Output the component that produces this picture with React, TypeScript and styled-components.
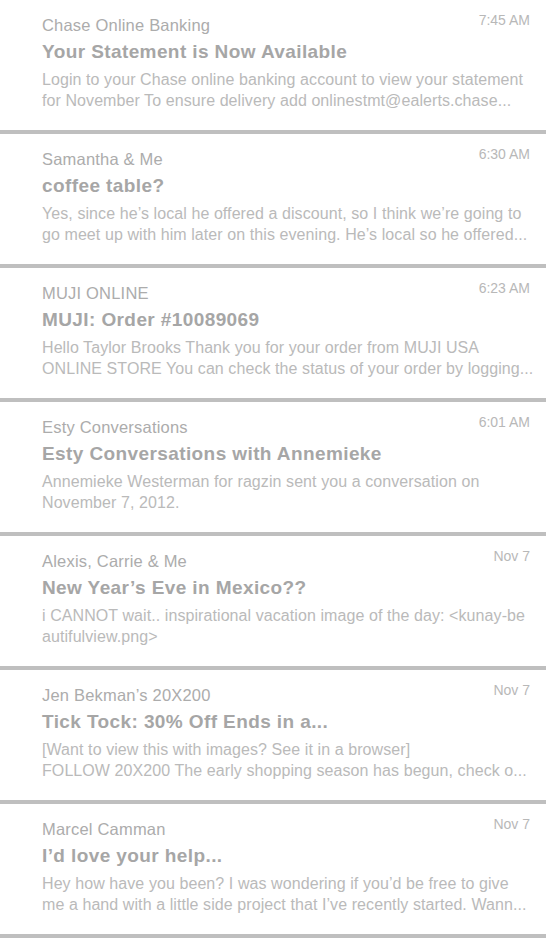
import styled, { createGlobalStyle } from "styled-components";

type Message = {
  from: string;
  time: string;
  subject: string;
  preview: string[];
};

const messages: Message[] = [
  {
    from: "Chase Online Banking",
    time: "7:45 AM",
    subject: "Your Statement is Now Available",
    preview: [
      "Login to your Chase online banking account to view your statement",
      "for November To ensure delivery add onlinestmt@ealerts.chase...",
    ],
  },
  {
    from: "Samantha & Me",
    time: "6:30 AM",
    subject: "coffee table?",
    preview: [
      "Yes, since he\u2019s local he offered a discount, so I think we\u2019re going to",
      "go meet up with him later on this evening. He\u2019s local so he offered...",
    ],
  },
  {
    from: "MUJI ONLINE",
    time: "6:23 AM",
    subject: "MUJI: Order #10089069",
    preview: [
      "Hello Taylor Brooks Thank you for your order from MUJI USA",
      "ONLINE STORE You can check the status of your order by logging...",
    ],
  },
  {
    from: "Esty Conversations",
    time: "6:01 AM",
    subject: "Esty Conversations with Annemieke",
    preview: [
      "Annemieke Westerman for ragzin sent you a conversation on",
      "November 7, 2012.",
    ],
  },
  {
    from: "Alexis, Carrie & Me",
    time: "Nov 7",
    subject: "New Year\u2019s Eve in Mexico??",
    preview: [
      "i CANNOT wait.. inspirational vacation image of the day: <kunay-be",
      "autifulview.png>",
    ],
  },
  {
    from: "Jen Bekman\u2019s 20X200",
    time: "Nov 7",
    subject: "Tick Tock: 30% Off Ends in a...",
    preview: [
      "[Want to view this with images? See it in a browser]",
      "FOLLOW 20X200 The early shopping season has begun, check o...",
    ],
  },
  {
    from: "Marcel Camman",
    time: "Nov 7",
    subject: "I\u2019d love your help...",
    preview: [
      "Hey how have you been? I was wondering if you\u2019d be free to give",
      "me a hand with a little side project that I\u2019ve recently started. Wann...",
    ],
  },
];

export default function App() {
  return (
    <>
      <GlobalStyle />
      <Inbox>
        {messages.map((m) => (
          <MessageRow key={m.subject}>
            <Header>
              <Sender>{m.from}</Sender>
              <Time>{m.time}</Time>
            </Header>
            <Subject>{m.subject}</Subject>
            <Preview>
              {m.preview.map((line) => (
                <PreviewLine key={line}>{line}</PreviewLine>
              ))}
            </Preview>
          </MessageRow>
        ))}
      </Inbox>
    </>
  );
}

const GlobalStyle = createGlobalStyle`
  body {
    margin: 0;
    background: #fff;
    font-family: "Liberation Sans", Arial, sans-serif;
  }
`;

const Inbox = styled.ul`
  list-style: none;
  margin: 0;
  padding: 0;
  width: 546px;
`;

const MessageRow = styled.li`
  box-sizing: border-box;
  height: 134px;
  padding: 13px 16px 0 42px;
  border-bottom: 4px solid #bfbfbf;
  overflow: hidden;
`;

const Header = styled.div`
  display: flex;
  justify-content: space-between;
  align-items: flex-start;
`;

const Sender = styled.div`
  font-size: 16.5px;
  line-height: 24px;
  letter-spacing: 0.2px;
  color: #acacac;
`;

const Time = styled.div`
  font-size: 14px;
  line-height: 14px;
  color: #b8b8b8;
`;

const Subject = styled.div`
  margin-top: 3px;
  font-size: 19px;
  line-height: 24px;
  letter-spacing: 0.4px;
  font-weight: bold;
  color: #a6a6a6;
`;

const Preview = styled.div`
  margin-top: 5px;
  font-size: 16px;
  line-height: 21px;
  letter-spacing: 0.08px;
  color: #bababa;
`;

const PreviewLine = styled.div`
  white-space: nowrap;
`;
